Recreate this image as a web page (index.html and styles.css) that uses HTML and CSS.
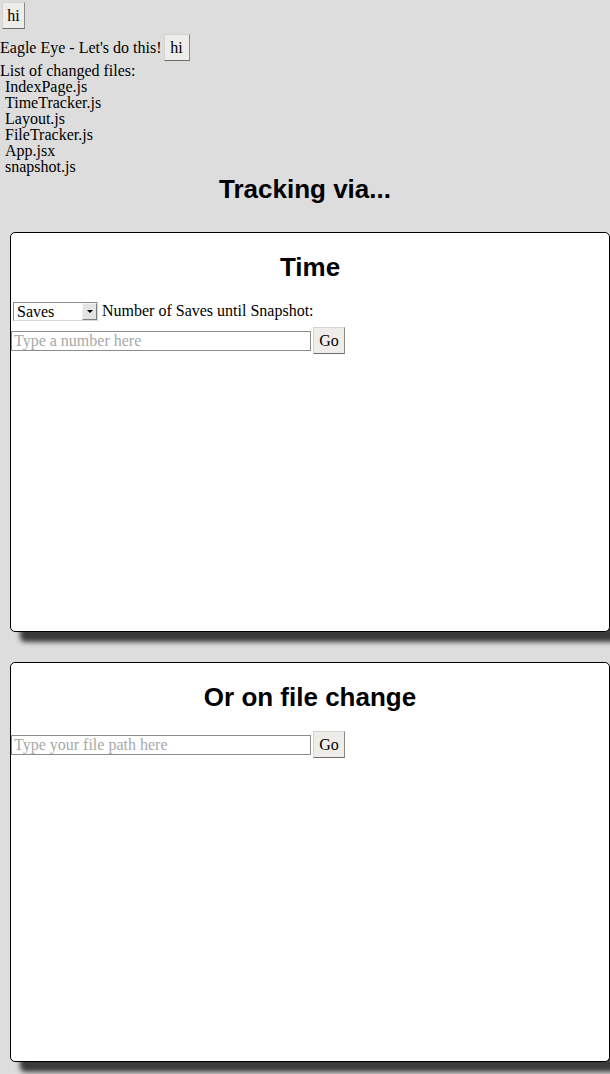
FILE: index.html
```html
<!DOCTYPE html>
<html>
<head>
<meta charset="utf-8">
<link rel="stylesheet" href="styles.css">
</head>
<body>
<div class="app">
  <button class="btn btn-top">hi</button>
  <div class="header">
    <span class="header-text">Eagle Eye - Let's do this!</span>
    <button class="btn">hi</button>
  </div>
  <div class="files">
    <div class="files-title">List of changed files:</div>
    <ul class="file-list">
      <li>IndexPage.js</li>
      <li>TimeTracker.js</li>
      <li>Layout.js</li>
      <li>FileTracker.js</li>
      <li>App.jsx</li>
      <li>snapshot.js</li>
    </ul>
  </div>
  <h2 class="title">Tracking via...</h2>
  <section class="card">
    <h2 class="card-title">Time</h2>
    <div class="row row-select">
      <span class="select-wrap">
        <select class="select">
          <option>Saves</option>
        </select>
      </span>
      <span class="label">Number of Saves until Snapshot:</span>
    </div>
    <div class="row row-input">
      <input class="text-input" type="text" placeholder="Type a number here">
      <button class="btn btn-go">Go</button>
    </div>
  </section>
  <section class="card card-second">
    <h2 class="card-title">Or on file change</h2>
    <div class="row row-input">
      <input class="text-input" type="text" placeholder="Type your file path here">
      <button class="btn btn-go">Go</button>
    </div>
  </section>
</div>
</body>
</html>
```

FILE: styles.css
```css
html, body {
  margin: 0;
  padding: 0;
  background: #dddddd;
}

body {
  font-family: "Liberation Serif", "Times New Roman", serif;
  font-size: 16px;
  color: #000;
  height: 1074px;
  overflow: hidden;
}

.app {
  display: flex;
  flex-direction: column;
  align-items: flex-start;
}

.btn {
  font-family: "Liberation Serif", "Times New Roman", serif;
  font-size: 16px;
  color: #000;
  background: #efede9;
  border: 1px solid;
  border-color: #d6d4d0 #8a8886 #6e6c6a #d6d4d0;
  border-radius: 0;
  height: 27px;
  padding: 0 5px;
  margin: 0;
  line-height: 25px;
  box-sizing: border-box;
}

.btn-top {
  margin: 2px 0 0 2px;
  width: 23px;
  padding: 0;
}

.header {
  display: flex;
  align-items: center;
  margin-top: 5px;
  height: 27px;
}

.header-text {
  line-height: 18px;
  margin-right: 2px;
}

.header .btn {
  width: 26px;
  padding: 0;
}

.files {
  line-height: 16px;
}

.files-title {
  line-height: 17px;
  padding-top: 1px;
}

.file-list {
  list-style: none;
  margin: 0;
  padding: 0 0 0 5px;
}

.file-list li {
  line-height: 16px;
}

.title {
  align-self: stretch;
  text-align: center;
  font-family: "Liberation Sans", Arial, sans-serif;
  font-weight: bold;
  font-size: 26px;
  line-height: 28px;
  margin: 0;
}

.card {
  box-sizing: border-box;
  width: 600px;
  height: 400px;
  margin: 29px 0 0 10px;
  background: #fff;
  border: 1px solid #000;
  border-radius: 5px;
  box-shadow: 10px 10px 5px #3a3a3a;
}

.card-second {
  margin-top: 30px;
}

.card-title {
  text-align: center;
  font-family: "Liberation Sans", Arial, sans-serif;
  font-weight: bold;
  font-size: 26px;
  line-height: 28px;
  margin: 20px 0;
}

.row {
  display: flex;
}

.row-select {
  height: 26px;
  align-items: flex-start;
}

.select-wrap {
  position: relative;
  display: inline-block;
  margin: 1px 0 0 2px;
  width: 85px;
  height: 19px;
}

.select {
  appearance: none;
  -webkit-appearance: none;
  box-sizing: border-box;
  width: 85px;
  height: 19px;
  margin: 0;
  padding: 0 0 0 3px;
  border: 1px solid;
  border-color: #8e8e8e #d8d8d8 #d8d8d8 #8e8e8e;
  border-radius: 0;
  background: #fff;
  font-family: "Liberation Serif", "Times New Roman", serif;
  font-size: 16px;
  line-height: 17px;
  color: #000;
}

.select-wrap::after {
  content: "";
  position: absolute;
  top: 1px;
  right: 1px;
  width: 15px;
  height: 17px;
  box-sizing: border-box;
  border: 1px solid;
  border-color: #f4f4f4 #7c7c7c #7c7c7c #f4f4f4;
  background: #e3e3e3;
  pointer-events: none;
}

.select-wrap::before {
  content: "";
  position: absolute;
  z-index: 1;
  top: 8px;
  right: 5px;
  width: 0;
  height: 0;
  border-left: 3px solid transparent;
  border-right: 3px solid transparent;
  border-top: 3px solid #000;
  pointer-events: none;
}

.label {
  margin-left: 4px;
  line-height: 20px;
}

.row-input {
  align-items: center;
  height: 27px;
}

.text-input {
  box-sizing: border-box;
  width: 300px;
  height: 20px;
  margin: 0 2px 0 0;
  padding: 0 2px;
  border: 1px solid #8c8c8c;
  border-radius: 0;
  background: #fff;
  font-family: "Liberation Serif", "Times New Roman", serif;
  font-size: 16px;
  color: #000;
  outline: none;
}

.text-input::placeholder {
  color: #a9a9a9;
  opacity: 1;
}

.btn-go {
  width: 32px;
  padding: 0;
}
```
